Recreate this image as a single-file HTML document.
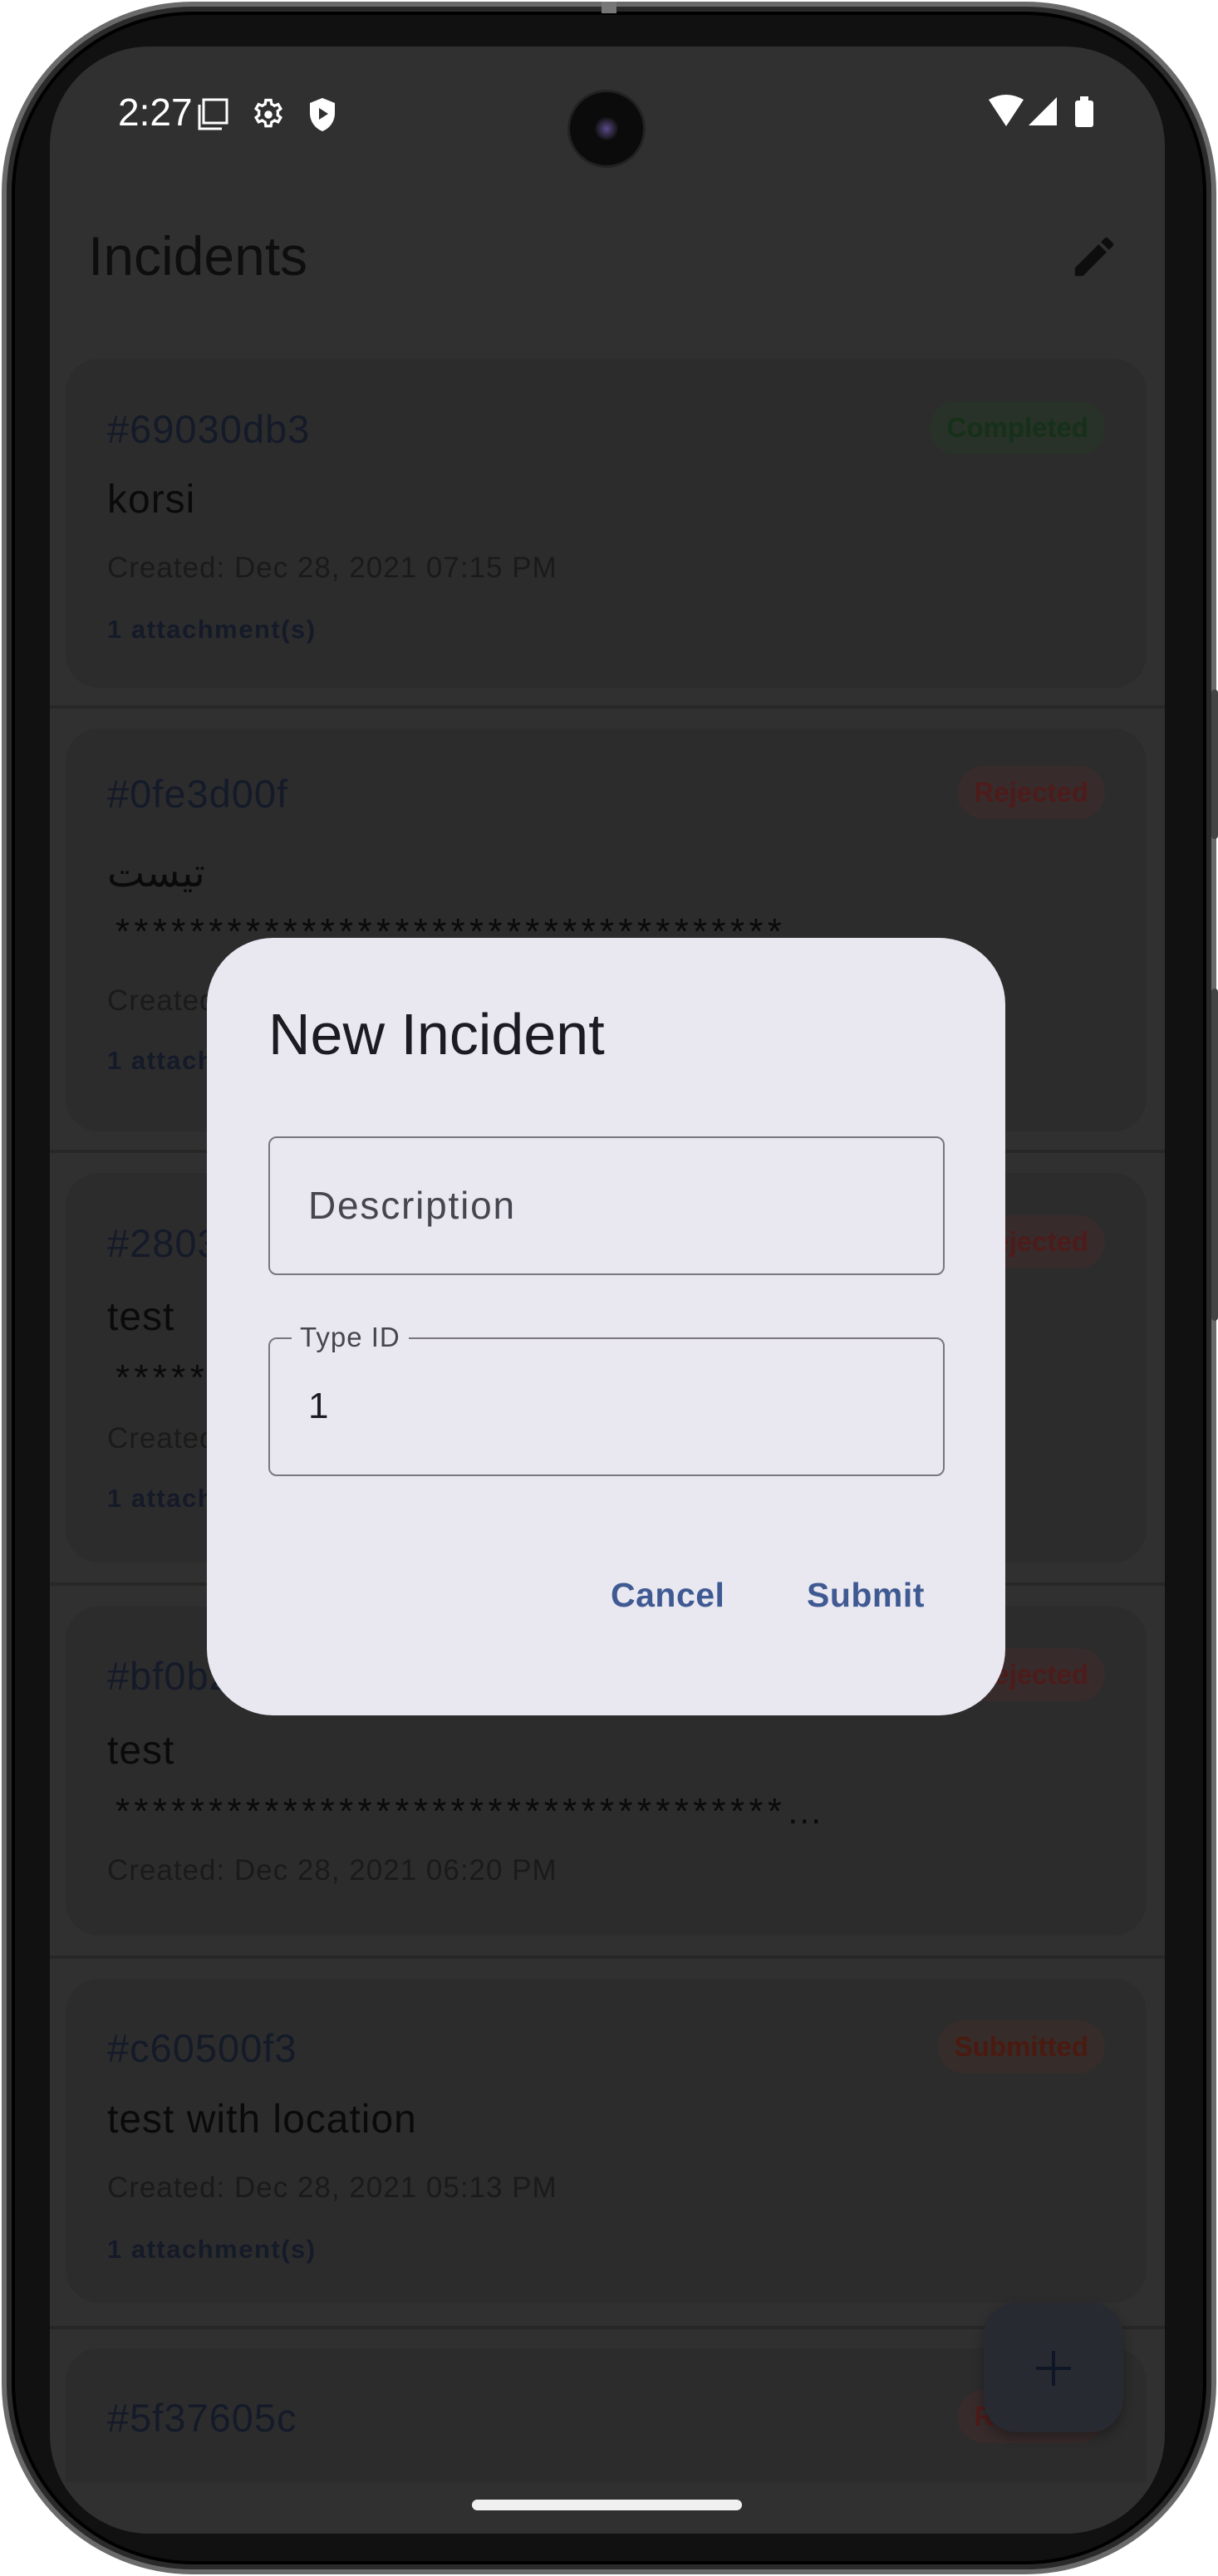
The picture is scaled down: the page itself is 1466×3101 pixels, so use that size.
<!DOCTYPE html>
<html><head><meta charset="utf-8">
<style>
*{margin:0;padding:0;box-sizing:border-box}
html,body{width:1466px;height:3101px;background:#fff;overflow:hidden;font-family:"Liberation Sans","DejaVu Sans",sans-serif}
.phone{position:absolute;left:2px;top:2px;width:1462px;height:3097px;border-radius:230px;background:#111;border:6px solid #6a6a6a;box-shadow:inset 0 0 0 6px #2a2a2a, inset 0 0 0 10px #000}
.screen{position:absolute;left:60px;top:56px;width:1342px;height:2994px;border-radius:120px;background:#303030;overflow:hidden}
.abs{position:absolute}
.sb{color:#fff;font-size:46px;}
.card{position:absolute;left:19px;width:1301px;background:#2c2c2d;border-radius:40px}
.sep{position:absolute;left:0;width:1342px;height:4px;background:#272727}
.id{position:absolute;left:50px;font-size:47px;color:#141a28;letter-spacing:1px}
.body{position:absolute;left:50px;font-size:48px;color:#0a0a0a;letter-spacing:1px}
.stars{position:absolute;left:60px;font-size:44px;color:#0a0a0a;letter-spacing:5.3px}
.cr{position:absolute;left:50px;font-size:35px;color:#1a1a1a;letter-spacing:1px}
.att{position:absolute;left:50px;font-size:31px;font-weight:bold;color:#141a28;letter-spacing:1.5px}
.chip{position:absolute;right:50px;height:64px;border-radius:32px;font-size:33px;font-weight:bold;line-height:64px;padding:0 20px}
.rej{background:#372b2b;color:#4e1b1b}
.dlg{position:absolute;left:189px;top:1073px;width:961px;height:936px;border-radius:80px;background:#e9e7f0}
.fld{position:absolute;left:74px;width:814px;height:167px;border:2.5px solid #79767d;border-radius:10px}
</style></head><body>
<div class="phone"></div>
<div class="abs" style="left:724px;top:2px;width:18px;height:14px;background:#777"></div>
<div class="abs" style="left:1458px;top:830px;width:8px;height:180px;background:#444;border-radius:4px"></div>
<div class="abs" style="left:1458px;top:1190px;width:8px;height:400px;background:#444;border-radius:4px"></div>
<div class="screen">
  <div class="abs sb" style="left:82px;top:56px;line-height:46px">2:27</div>
  <svg class="abs" style="left:177px;top:62px" width="40" height="40" viewBox="0 0 40 40"><rect x="8" y="2" width="28" height="28" fill="none" stroke="#fff" stroke-width="3"/><path d="M3 8 V37 H30" fill="none" stroke="#fff" stroke-width="3"/></svg>
  <svg class="abs" style="left:241px;top:60px" width="44" height="44" viewBox="0 0 24 24"><path fill="none" stroke="#fff" stroke-width="1.8" d="M10.3 2.5h3.4l.4 2.6c.7.3 1.3.6 1.9 1.1l2.4-1 1.7 2.9-2 1.6a7 7 0 0 1 0 2.6l2 1.6-1.7 2.9-2.4-1c-.6.5-1.2.8-1.900 1.1l-.4 2.6h-3.4l-.4-2.6c-.7-.3-1.3-.6-1.9-1.1l-2.4 1-1.7-2.9 2-1.6a7 7 0 0 1 0-2.6l-2-1.6 1.7-2.9 2.4 1c.6-.5 1.2-.8 1.9-1.1z"/><circle cx="12" cy="12" r="2.6" fill="#fff"/></svg>
  <svg class="abs" style="left:310px;top:60px" width="36" height="44" viewBox="0 0 36 44"><path d="M18 2 L33 8 V20 C33 31 26 39 18 42 C10 39 3 31 3 20 V8 Z" fill="#fff"/><path d="M14 14 L25 21 L14 28Z" fill="#303030"/></svg>
  <div class="abs" style="left:623px;top:52px;width:94px;height:94px;border-radius:50%;background:#0b0b0b;border:3px solid #222"><div style="position:absolute;left:30px;top:30px;width:28px;height:28px;border-radius:50%;background:radial-gradient(#5a4a8a,#111 70%)"></div></div>
  <svg class="abs" style="left:1130px;top:58px" width="130" height="40" viewBox="0 0 130 40"><path d="M0 6 Q21 -6 42 6 L21 38 Z" fill="#fff"/><path d="M48 37 L82 3 V37 Z" fill="#fff"/><rect x="104" y="7" width="22" height="32" rx="3" fill="#fff"/><rect x="110" y="2" width="10" height="6" fill="#fff"/></svg>
  <div class="abs" style="left:46px;top:214px;font-size:66px;color:#0e0e0e">Incidents</div>
  <svg class="abs" style="left:1226px;top:222px" width="62" height="62" viewBox="0 0 24 24"><path fill="#0e0e0e" d="M3 17.25V21h3.75L17.81 9.94l-3.750-3.75L3 17.25zM20.71 7.04a1 1 0 0 0 0-1.41l-2.34-2.34a1 1 0 0 0-1.41 0l-1.83 1.83 3.75 3.75 1.83-1.83z"/></svg>
  <div class="sep" style="top:793px"></div>
  <div class="sep" style="top:1328px"></div>
  <div class="sep" style="top:1849px"></div>
  <div class="sep" style="top:2298px"></div>
  <div class="sep" style="top:2744px"></div>

  <div class="card" style="top:376px;height:396px">
    <div class="id" style="top:57px">#69030db3</div>
    <div class="chip" style="top:51px;background:#283228;color:#16301a">Completed</div>
    <div class="body" style="top:142px">korsi</div>
    <div class="cr" style="top:232px">Created: Dec 28, 2021 07:15 PM</div>
    <div class="att" style="top:308px">1 attachment(s)</div>
  </div>
  <div class="card" style="top:821px;height:485px">
    <div class="id" style="top:51px">#0fe3d00f</div>
    <div class="chip rej" style="top:45px">Rejected</div>
    <div class="body" style="top:146px;font-family:'DejaVu Sans',sans-serif">تیست</div>
    <div class="stars" style="top:220px">************************************</div>
    <div class="cr" style="top:308px">Created: Dec 28, 2021 06:40 PM</div>
    <div class="att" style="top:382px">1 attachment(s)</div>
  </div>
  <div class="card" style="top:1356px;height:469px">
    <div class="id" style="top:57px">#28030c3e</div>
    <div class="chip rej" style="top:51px">Rejected</div>
    <div class="body" style="top:146px">test</div>
    <div class="stars" style="top:222px">************************************</div>
    <div class="cr" style="top:300px">Created: Dec 28, 2021 06:30 PM</div>
    <div class="att" style="top:374px">1 attachment(s)</div>
  </div>
  <div class="card" style="top:1878px;height:396px">
    <div class="id" style="top:56px">#bf0b2a11</div>
    <div class="chip rej" style="top:50px">Rejected</div>
    <div class="body" style="top:146px">test</div>
    <div class="stars" style="top:222px">************************************…</div>
    <div class="cr" style="top:298px">Created: Dec 28, 2021 06:20 PM</div>
  </div>
  <div class="card" style="top:2326px;height:390px">
    <div class="id" style="top:56px">#c60500f3</div>
    <div class="chip" style="top:50px;background:#362c29;color:#4a1a10">Submitted</div>
    <div class="body" style="top:142px">test with location</div>
    <div class="cr" style="top:232px">Created: Dec 28, 2021 05:13 PM</div>
    <div class="att" style="top:308px">1 attachment(s)</div>
  </div>
  <div class="card" style="top:2771px;height:400px">
    <div class="id" style="top:56px">#5f37605c</div>
    <div class="chip rej" style="top:50px">Rejected</div>
  </div>
  <div class="abs" style="left:0;top:2932px;width:1342px;height:62px;background:#303030"></div>
  <div class="abs" style="left:1124px;top:2716px;width:168px;height:156px;border-radius:40px;background:#282a32;box-shadow:0 6px 14px rgba(0,0,0,.3)">
    <div style="position:absolute;left:63px;top:77px;width:42px;height:4px;background:#0f1626"></div>
    <div style="position:absolute;left:82px;top:58px;width:4px;height:42px;background:#0f1626"></div>
  </div>
  <div class="abs" style="left:508px;top:2953px;width:325px;height:13px;border-radius:7px;background:#f0f0f0"></div>
  <div class="dlg">
    <div class="abs" style="left:74px;top:76px;font-size:70px;color:#1b1b21">New Incident</div>
    <div class="fld" style="top:239px"><div class="abs" style="left:46px;top:54px;font-size:46px;color:#46464f;letter-spacing:1.8px">Description</div></div>
    <div class="fld" style="top:481px">
      <div class="abs" style="left:26px;top:-20px;padding:0 10px;background:#e9e7f0;font-size:33px;color:#46464f;line-height:36px;letter-spacing:1px">Type ID</div>
      <div class="abs" style="left:46px;top:56px;font-size:44px;color:#1b1b21">1</div>
    </div>
    <div class="abs" style="left:486px;top:768px;font-size:41px;font-weight:bold;color:#3f5a92;letter-spacing:.5px">Cancel</div>
    <div class="abs" style="left:722px;top:768px;font-size:41px;font-weight:bold;color:#3f5a92;letter-spacing:.5px">Submit</div>
  </div>
</div>
</body></html>
